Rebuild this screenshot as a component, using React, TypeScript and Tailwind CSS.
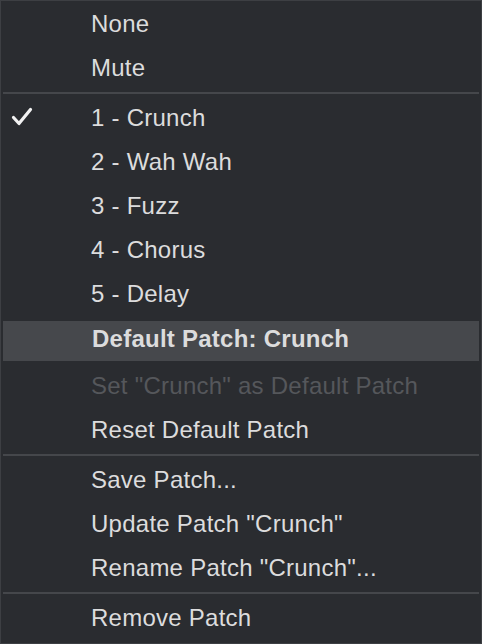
import React from "react"

type Item =
	| { kind: "item"; label: string; checked?: boolean; disabled?: boolean; active?: boolean }
	| { kind: "sep" }

const items: Item[] = [
	{ kind: "item", label: "None" },
	{ kind: "item", label: "Mute" },
	{ kind: "sep" },
	{ kind: "item", label: "1 - Crunch", checked: true },
	{ kind: "item", label: "2 - Wah Wah" },
	{ kind: "item", label: "3 - Fuzz" },
	{ kind: "item", label: "4 - Chorus" },
	{ kind: "item", label: "5 - Delay" },
	{ kind: "item", label: "Default Patch: Crunch", active: true },
	{ kind: "item", label: 'Set "Crunch" as Default Patch', disabled: true },
	{ kind: "item", label: "Reset Default Patch" },
	{ kind: "sep" },
	{ kind: "item", label: "Save Patch..." },
	{ kind: "item", label: 'Update Patch "Crunch"' },
	{ kind: "item", label: 'Rename Patch "Crunch"...' },
	{ kind: "sep" },
	{ kind: "item", label: "Remove Patch" },
]

// 체크 표시
const Check = () => (
	<svg width="22" height="20" viewBox="0 0 22 20" className="absolute left-[10px] top-[11px]">
		<path
			d="M2.5 10.5 L8 16.5 L19.5 2.5"
			fill="none"
			stroke="#f2f2f2"
			strokeWidth="3.2"
			strokeLinecap="round"
			strokeLinejoin="round"
		/>
	</svg>
)

export default function App() {
	return (
		<div
			className="w-[482px] h-[644px] bg-[#2a2c30] border border-[#3d3f43] pt-[1px] pb-[3px] flex flex-col text-[24px] tracking-[0.25px] text-[#dcdcdd]"
			style={{ fontFamily: '"Liberation Sans", Arial, sans-serif' }}
		>
			{items.map((it, i) => {
				if (it.kind === "sep") {
					return (
						<div key={i} className="h-[6px] flex items-center px-[2px]">
							<div className="h-[2px] w-full bg-[#45474b]" />
						</div>
					)
				}
				if (it.active) {
					return (
						<div key={i} className="h-[48px] pt-[5px] px-[2px]">
							<div className="h-[40px] bg-[#46484c] flex items-center pl-[89px] pb-[4px] font-bold">
								{it.label}
							</div>
						</div>
					)
				}
				return (
					<div
						key={i}
						className={`relative h-[44px] flex items-center pl-[90px] ${
							it.disabled ? "text-[#55575b]" : ""
						}`}
					>
						{it.checked && <Check />}
						{it.label}
					</div>
				)
			})}
		</div>
	)
}
